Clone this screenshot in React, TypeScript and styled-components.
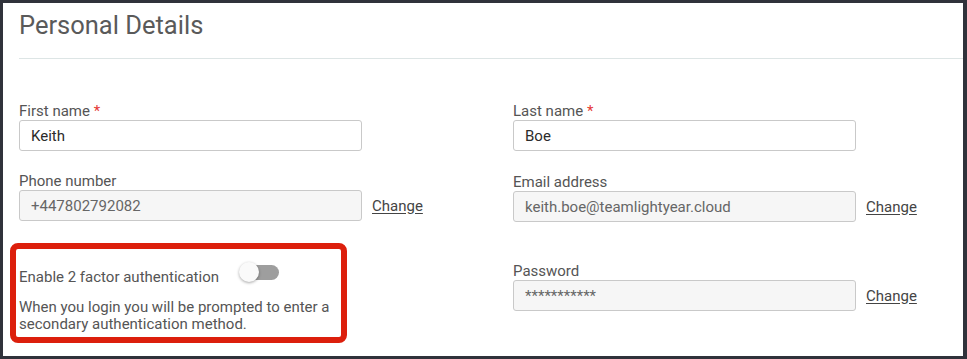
import React from 'react'
import styled, { createGlobalStyle } from 'styled-components'

const GlobalStyle = createGlobalStyle`
  html, body {
    margin: 0;
    padding: 0;
    background: #30323b;
  }
  body {
    font-family: Roboto, 'Liberation Sans', sans-serif;
  }
`

type FieldProps = {
  label: string
  value: string
  required?: boolean
  locked?: boolean
  change?: boolean
  top: number
}

const Field = ({ label, value, required, locked, change, top }: FieldProps) => (
  <FieldWrapper $top={top}>
    <Label>
      {label}
      {required && <Required> *</Required>}
    </Label>
    <InputRow>
      <TextInput readOnly value={value} $locked={locked} />
      {change && <ChangeLink href="#">Change</ChangeLink>}
    </InputRow>
  </FieldWrapper>
)

const Toggle = () => (
  <Switch>
    <Track />
    <Thumb />
  </Switch>
)

export default function App() {
  return (
    <>
      <GlobalStyle />
      <Frame>
        <Title>Personal Details</Title>
        <Divider />
        <Columns>
          <Column>
            <Field label="First name" required value="Keith" top={0} />
            <Field label="Phone number" value="+447802792082" locked change top={22} />
            <TwoFactorBox>
              <ToggleRow>
                <ToggleLabel>Enable 2 factor authentication</ToggleLabel>
                <Toggle />
              </ToggleRow>
              <Hint>
                When you login you will be prompted to enter a secondary authentication method.
              </Hint>
            </TwoFactorBox>
          </Column>
          <Column>
            <Field label="Last name" required value="Boe" top={0} />
            <Field label="Email address" value="keith.boe@teamlightyear.cloud" locked change top={23} />
            <Field label="Password" value="***********" locked change top={41} />
          </Column>
        </Columns>
      </Frame>
    </>
  )
}

const Frame = styled.div`
  margin: 3px 0 0 3px;
  width: 960px;
  height: 353px;
  background: #fff;
  padding-left: 16px;
  box-sizing: border-box;
  overflow: hidden;
`

const Title = styled.h1`
  margin: 0;
  padding-top: 7px;
  font-size: 25.5px;
  line-height: 30px;
  font-weight: 400;
  color: #5a5a5a;
`

const Divider = styled.hr`
  margin: 18px 0 0;
  border: 0;
  border-top: 1px solid #dde5e5;
`

const Columns = styled.div`
  margin-top: 44px;
  display: grid;
  grid-template-columns: 494px 1fr;
`

const Column = styled.div`
  display: flex;
  flex-direction: column;
  align-items: flex-start;
`

const FieldWrapper = styled.div<{ $top: number }>`
  margin-top: ${p => p.$top}px;
`

const Label = styled.div`
  font-size: 15px;
  line-height: 17px;
  color: #555;
`

const Required = styled.span`
  color: #e53935;
`

const InputRow = styled.div`
  display: flex;
  align-items: center;
`

const TextInput = styled.input<{ $locked?: boolean }>`
  width: 343px;
  height: 31px;
  box-sizing: border-box;
  border: 1px solid #c9c9c9;
  border-radius: 3px;
  padding: 0 11px;
  font-family: Roboto, 'Liberation Sans', sans-serif;
  font-size: 15px;
  color: ${p => (p.$locked ? '#666' : '#2b2b2b')};
  background: ${p => (p.$locked ? '#f6f6f6' : '#fff')};
  outline: none;
`

const ChangeLink = styled.a`
  margin-left: 10px;
  font-size: 15px;
  color: #444;
  text-decoration: underline;
  text-underline-offset: 2px;
`

const TwoFactorBox = styled.div`
  margin: 22px 0 0 -9px;
  width: 337px;
  box-sizing: border-box;
  border: 6px solid #dc1f0c;
  border-radius: 8px;
  padding: 13px 6px 4px 3px;
`

const ToggleRow = styled.div`
  display: flex;
  align-items: flex-start;
`

const ToggleLabel = styled.span`
  margin-top: 7px;
  font-size: 15px;
  line-height: 17px;
  color: #555;
`

const Switch = styled.div`
  position: relative;
  margin-left: 20px;
  width: 40px;
  height: 21px;
`

const Track = styled.div`
  position: absolute;
  left: 3px;
  right: 0;
  top: 3px;
  height: 15px;
  border-radius: 8px;
  background: #9e9e9e;
`

const Thumb = styled.div`
  position: absolute;
  left: 0;
  top: 0;
  width: 20px;
  height: 20px;
  border-radius: 50%;
  background: #fafafa;
  box-shadow: 0 1px 3px rgba(0, 0, 0, 0.35);
`

const Hint = styled.p`
  margin: 13px 0 0;
  font-size: 15px;
  line-height: 17px;
  color: #555;
`
